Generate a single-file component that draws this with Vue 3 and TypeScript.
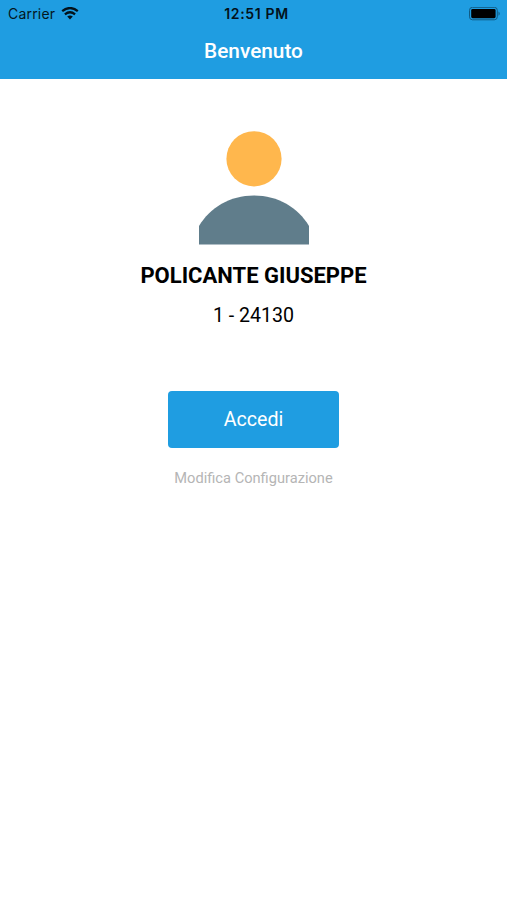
<script setup lang="ts">
const user: { name: string; code: string } = { name: 'POLICANTE GIUSEPPE', code: '1 - 24130' }
</script>

<template>
  <div class="screen">
    <header class="header">
      <div class="status">
        <div class="carrier">
          <span>Carrier</span>
          <svg class="wifi" viewBox="0 0 18 13" width="18" height="13">
            <path d="M1.2 4.2 Q9 -2.1 16.8 4.2" />
            <path d="M3.9 7.3 Q9 3.3 14.1 7.3" />
            <path class="dot" d="M6.2 9.6 Q9 7.3 11.8 9.6 L9 12.4 Z" />
          </svg>
        </div>
        <span class="time">12:51 PM</span>
        <svg class="battery" viewBox="0 0 32 14" width="32" height="14">
          <rect x="0.5" y="0.3" width="27.8" height="12.5" rx="3" />
          <rect class="fill" x="2.2" y="2" width="24.4" height="9.2" rx="1.4" />
          <path class="tip" d="M29.5 4.4 Q32 6.6 29.5 8.8 Z" />
        </svg>
      </div>
      <h1 class="title">Benvenuto</h1>
    </header>
    <main class="content">
      <svg class="avatar" viewBox="0 0 112 114" width="112" height="114">
        <circle cx="56" cy="27.8" r="27.6" fill="#ffb74d" />
        <path d="M1 113.4 V95 C12 76.5 32 64.5 56 64.5 S100 76.5 111 95 V113.4 Z" fill="#607d8b" />
      </svg>
      <div class="name">{{ user.name }}</div>
      <div class="code">{{ user.code }}</div>
      <button class="login" type="button">Accedi</button>
      <a class="config">Modifica Configurazione</a>
    </main>
  </div>
</template>

<style>
body { background: #fff; }
</style>

<style scoped>
.screen { min-height: 900px; font-family: Roboto, sans-serif; color: #000; }
.header { height: 79.4px; background: #1f9de1; }
.status { display: grid; grid-template-columns: 1fr auto 1fr; align-items: center; height: 27px; padding: 0 6px 0 8px; font-family: Inter, sans-serif; font-size: 14px; color: #041722; }
.carrier { display: flex; align-items: center; gap: 6px; letter-spacing: 0.2px; }
.time { padding-left: 4px; font-size: 14px; font-weight: 600; letter-spacing: 0.65px; color: #03121b; }
.wifi { fill: none; stroke: #03121b; stroke-width: 2.3; }
.wifi .dot { fill: #03121b; stroke: none; }
.battery { justify-self: end; fill: none; stroke: #115a82; stroke-width: 1; }
.battery .fill { fill: #000; stroke: none; }
.battery .tip { fill: #115a82; stroke: none; }
.title { margin: 0; text-align: center; color: #fff; font-size: 20.8px; font-weight: 500; line-height: 48px; }
.content { display: flex; flex-direction: column; align-items: center; padding-top: 51.6px; }
.avatar { display: block; }
.name { margin-top: 18.4px; font-size: 22px; line-height: 25px; font-weight: 700; }
.code { margin-top: 16px; font-size: 19.6px; line-height: 24px; }
.login { margin-top: 62.2px; width: 171px; height: 57px; padding: 0; border: 0; border-radius: 4px; background: #1f9de1; color: #fff; font-family: inherit; font-size: 19.6px; }
.config { margin-top: 21.4px; color: #b5b5b5; font-size: 14.65px; line-height: 18px; }
</style>
